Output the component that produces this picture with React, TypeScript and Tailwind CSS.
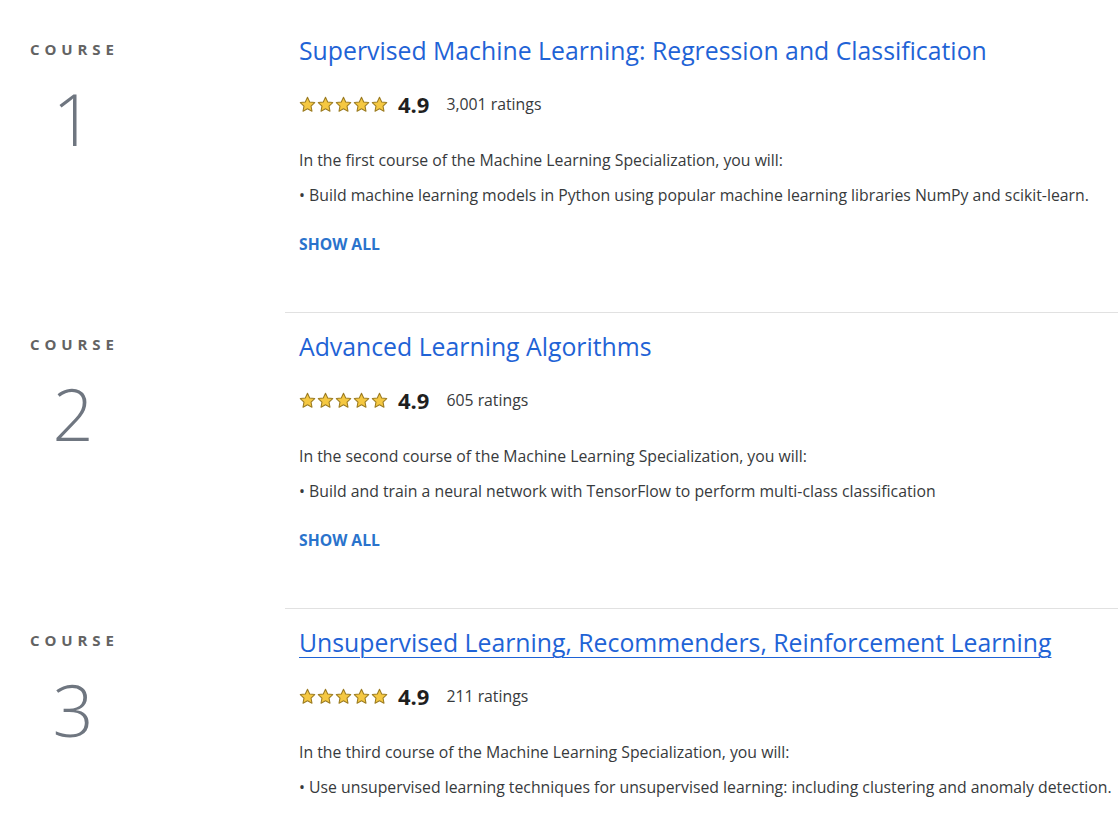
import React from "react";

type Course = {
  num: number;
  title: string;
  ratings: string;
  intro: string;
  bullet: string;
  underline?: boolean;
};

const courses: Course[] = [
  {
    num: 1,
    title: "Supervised Machine Learning: Regression and Classification",
    ratings: "3,001 ratings",
    intro: "In the first course of the Machine Learning Specialization, you will:",
    bullet:
      "• Build machine learning models in Python using popular machine learning libraries NumPy and scikit-learn.",
  },
  {
    num: 2,
    title: "Advanced Learning Algorithms",
    ratings: "605 ratings",
    intro: "In the second course of the Machine Learning Specialization, you will:",
    bullet: "• Build and train a neural network with TensorFlow to perform multi-class classification",
  },
  {
    num: 3,
    title: "Unsupervised Learning, Recommenders, Reinforcement Learning",
    ratings: "211 ratings",
    intro: "In the third course of the Machine Learning Specialization, you will:",
    bullet:
      "• Use unsupervised learning techniques for unsupervised learning: including clustering and anomaly detection.",
    underline: true,
  },
];

const Star: React.FC = () => (
  <svg width="17" height="17" viewBox="0 0 24 24">
    <path
      d="M12 1.8l3.1 6.6 7.1.9-5.2 5 1.3 7.1L12 18l-6.3 3.4 1.3-7.1-5.2-5 7.1-.9z"
      fill="#f5c842"
      stroke="#9c7c22"
      strokeWidth="1.5"
      strokeLinejoin="round"
    />
  </svg>
);

const CourseRow: React.FC<{ course: Course; first: boolean }> = ({ course, first }) => (
  <div className={"flex shrink-0 " + (first ? "h-[295px]" : "h-[296px]")}>
    <div className="w-[285px] shrink-0 pl-[30px] pt-[23px]">
      <div className="text-[15px] leading-[18px] font-bold tracking-[4.9px] text-[#636363]">
        COURSE
      </div>
      <div className="w-[86px] mt-[11px] text-center text-[72px] leading-[98px] font-light text-[#6f7680]">
        {course.num}
      </div>
    </div>
    <div className={"flex-1 pl-[14px] pt-[17px] " + (first ? "" : "border-t border-[#e1e1e1]")}>
      <a
        href="#"
        className={
          "block whitespace-nowrap text-[24.8px] leading-[32px] text-[#1f63d6] " +
          (course.underline ? "underline decoration-1 underline-offset-[5px]" : "")
        }
      >
        {course.title}
      </a>
      <div className="mt-[26px] flex items-center h-[24px]">
        <div className="flex gap-[1px]">
          <Star />
          <Star />
          <Star />
          <Star />
          <Star />
        </div>
        <span className="ml-[10px] text-[22px] font-bold text-[#1f1f1f] leading-[24px]">4.9</span>
        <span className="ml-[17px] text-[15.8px] text-[#373a3c] leading-[24px]">{course.ratings}</span>
      </div>
      <p className="mt-[33px] whitespace-nowrap text-[15.8px] leading-[22px] text-[#373a3c]">
        {course.intro}
      </p>
      <p className="mt-[13px] whitespace-nowrap text-[15.8px] leading-[22px] text-[#373a3c]">
        {course.bullet}
      </p>
      <button className="mt-[28px] block text-[15.7px] leading-[20px] font-bold text-[#2a73cc]">
        SHOW ALL
      </button>
    </div>
  </div>
);

const App: React.FC = () => {
  return (
    <div
      className="bg-white h-[813px] overflow-hidden pt-[17px] flex flex-col"
      style={{ fontFamily: '"Open Sans", "Liberation Sans", sans-serif' }}
    >
      {courses.map((c, i) => (
        <CourseRow key={c.num} course={c} first={i === 0} />
      ))}
    </div>
  );
};

export default App;
